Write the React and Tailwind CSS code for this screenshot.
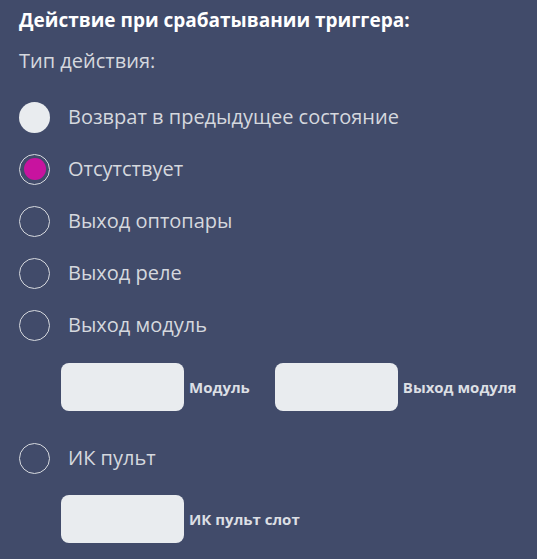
import React, { useState } from 'react';

const options = [
  { id: 'restore', text: 'Возврат в предыдущее состояние' },
  { id: 'none', text: 'Отсутствует' },
  { id: 'opto', text: 'Выход оптопары' },
  { id: 'relay', text: 'Выход реле' },
  { id: 'module', text: 'Выход модуль' },
];

function Radio({ checked, filled }) {
  if (filled) {
    return <div className="w-[31px] h-[31px] rounded-full bg-[#e9ecef] shrink-0" />;
  }
  return (
    <div className="w-[31px] h-[31px] rounded-full border-[1.5px] border-[#d6d9de] flex items-center justify-center shrink-0">
      {checked && <div className="w-[22px] h-[22px] rounded-full bg-[#c8139f]" />}
    </div>
  );
}

function Field({ label }) {
  return (
    <div className="flex items-center">
      <div className="w-[123px] h-[48px] rounded-[8px] bg-[#e9ecef]" />
      <span className="ml-[5px] text-[15px] font-bold text-[#dcdfe4]">{label}</span>
    </div>
  );
}

export default function App() {
  const [selected, setSelected] = useState('none');

  return (
    <div
      className="min-h-screen w-full bg-[#414b6a] pl-[19px] pt-[8px] pb-4"
      style={{ fontFamily: '"Open Sans", "Noto Sans", sans-serif' }}
    >
      {/* Заголовок */}
      <div className="text-[19px] leading-[24px] font-bold text-white">
        Действие при срабатывании триггера:
      </div>
      <div className="mt-[17px] text-[20px] leading-[24px] text-[#d5d8de]">Тип действия:</div>

      {/* Варианты */}
      <div className="mt-[18px]">
        {options.map((opt, i) => (
          <div
            key={opt.id}
            className="h-[52px] flex items-center cursor-pointer"
            onClick={() => setSelected(opt.id)}
          >
            <Radio checked={selected === opt.id} filled={i === 0} />
            <span className="ml-[18px] text-[20px] text-[#d5d8de]">{opt.text}</span>
          </div>
        ))}
      </div>

      <div className="mt-[12px] ml-[42px] flex items-center gap-[25px]">
        <Field label="Модуль" />
        <Field label="Выход модуля" />
      </div>

      <div
        className="mt-[21px] h-[52px] flex items-center cursor-pointer"
        onClick={() => setSelected('ir')}
      >
        <Radio checked={selected === 'ir'} />
        <span className="ml-[18px] text-[20px] text-[#d5d8de]">ИК пульт</span>
      </div>

      <div className="mt-[11px] ml-[42px] flex items-center">
        <Field label="ИК пульт слот" />
      </div>
    </div>
  );
}
